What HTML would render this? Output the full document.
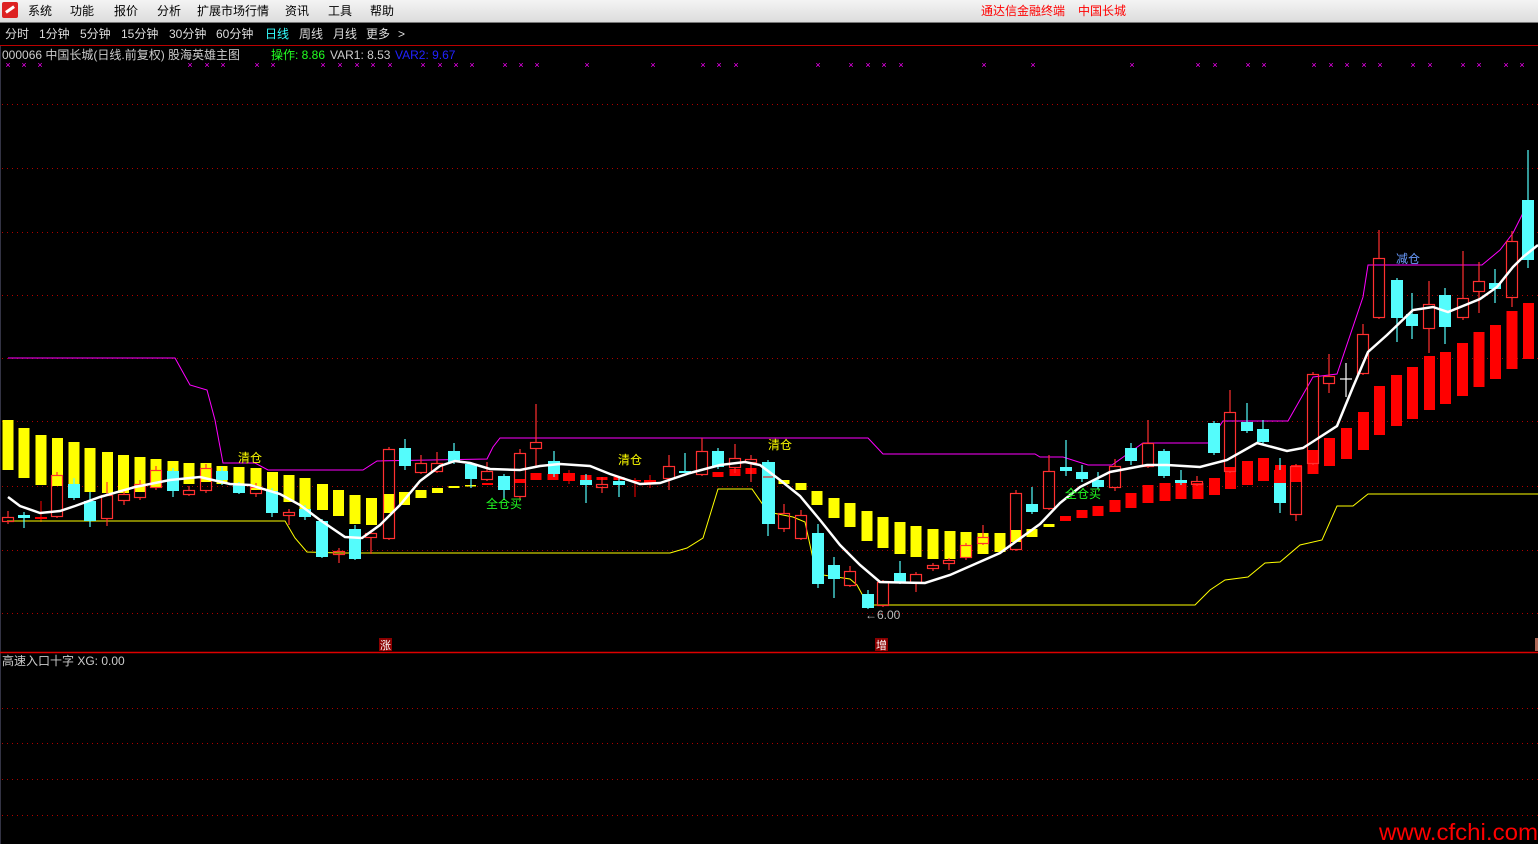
<!DOCTYPE html>
<html><head><meta charset="utf-8"><style>
html,body{margin:0;padding:0;background:#000;width:1538px;height:844px;overflow:hidden;font-family:"Liberation Sans","Noto Sans CJK SC",sans-serif}
.menu{position:absolute;left:0;top:0;width:1538px;height:22px;background:linear-gradient(#f4f4f4,#dcdcdc);border-bottom:1px solid #777;}
.menu span{position:absolute;top:3px;font-size:12px;color:#000;line-height:16px}
.logo{position:absolute;left:2px;top:2px;width:16px;height:16px;background:#d22;border-radius:2px}
.logo:after{content:"";position:absolute;left:3px;top:6px;width:10px;height:3px;background:#fff;transform:rotate(-35deg)}
.row2{position:absolute;left:0;top:23px;width:1538px;height:22px;background:#000;border-bottom:1px solid #b00;}
.row2 span{position:absolute;top:3px;font-size:12px;color:#ddd;line-height:16px}
svg{position:absolute;left:0;top:0}
</style></head><body>
<div class="menu">
<div class="logo"></div>
<span style="left:28px">系统</span><span style="left:70px">功能</span><span style="left:114px">报价</span><span style="left:157px">分析</span><span style="left:197px">扩展市场行情</span><span style="left:285px">资讯</span><span style="left:328px">工具</span><span style="left:370px">帮助</span>
<span style="left:981px;color:#f00">通达信金融终端</span><span style="left:1078px;color:#f00">中国长城</span>
</div>
<div class="row2">
<span style="left:5px">分时</span><span style="left:39px">1分钟</span><span style="left:80px">5分钟</span><span style="left:121px">15分钟</span><span style="left:169px">30分钟</span><span style="left:216px">60分钟</span><span style="left:265px;color:#3ff">日线</span><span style="left:299px">周线</span><span style="left:333px">月线</span><span style="left:366px">更多</span><span style="left:398px">&gt;</span>
</div>
<svg width="1538" height="844" viewBox="0 0 1538 844" style="top:0">
<line x1="0.5" y1="46" x2="0.5" y2="844" stroke="#334" />
<g stroke="#b00000" stroke-dasharray="1 4" stroke-width="1">
<line x1="2" y1="104.5" x2="1538" y2="104.5"/><line x1="2" y1="168.5" x2="1538" y2="168.5"/><line x1="2" y1="232.5" x2="1538" y2="232.5"/><line x1="2" y1="295.5" x2="1538" y2="295.5"/><line x1="2" y1="358.5" x2="1538" y2="358.5"/><line x1="2" y1="421.5" x2="1538" y2="421.5"/><line x1="2" y1="486.5" x2="1538" y2="486.5"/><line x1="2" y1="550.5" x2="1538" y2="550.5"/><line x1="2" y1="613.5" x2="1538" y2="613.5"/>
<line x1="2" y1="708.5" x2="1538" y2="708.5"/><line x1="2" y1="743.5" x2="1538" y2="743.5"/><line x1="2" y1="779.5" x2="1538" y2="779.5"/><line x1="2" y1="815.5" x2="1538" y2="815.5"/>
</g>
<line x1="0" y1="652.5" x2="1538" y2="652.5" stroke="#d00" stroke-width="1.5"/>
<text x="2" y="59" font-size="12" fill="#ccc">000066 中国长城(日线.前复权) 股海英雄主图</text>
<text x="271" y="59" font-size="12" fill="#2f2">操作: 8.86</text>
<text x="330" y="59" font-size="12" fill="#ccc">VAR1: 8.53</text>
<text x="395" y="59" font-size="12" fill="#22f">VAR2: 9.67</text>
<g fill="#f0f" font-size="9" text-anchor="middle">
<text x="8" y="68">×</text><text x="24" y="68">×</text><text x="40" y="68">×</text><text x="190" y="68">×</text><text x="207" y="68">×</text><text x="223" y="68">×</text><text x="257" y="68">×</text><text x="273" y="68">×</text><text x="323" y="68">×</text><text x="340" y="68">×</text><text x="357" y="68">×</text><text x="373" y="68">×</text><text x="390" y="68">×</text><text x="423" y="68">×</text><text x="440" y="68">×</text><text x="456" y="68">×</text><text x="472" y="68">×</text><text x="505" y="68">×</text><text x="521" y="68">×</text><text x="537" y="68">×</text><text x="587" y="68">×</text><text x="653" y="68">×</text><text x="703" y="68">×</text><text x="719" y="68">×</text><text x="736" y="68">×</text><text x="818" y="68">×</text><text x="851" y="68">×</text><text x="868" y="68">×</text><text x="884" y="68">×</text><text x="901" y="68">×</text><text x="984" y="68">×</text><text x="1033" y="68">×</text><text x="1132" y="68">×</text><text x="1198" y="68">×</text><text x="1215" y="68">×</text><text x="1248" y="68">×</text><text x="1264" y="68">×</text><text x="1314" y="68">×</text><text x="1331" y="68">×</text><text x="1347" y="68">×</text><text x="1364" y="68">×</text><text x="1380" y="68">×</text><text x="1413" y="68">×</text><text x="1430" y="68">×</text><text x="1463" y="68">×</text><text x="1479" y="68">×</text><text x="1506" y="68">×</text><text x="1522" y="68">×</text>
</g>
<g fill="#ff0">
<rect x="2.5" y="420" width="11" height="50"/><rect x="18.5" y="428" width="11" height="50"/><rect x="35.5" y="435" width="11" height="50"/><rect x="52" y="438" width="11" height="48"/><rect x="68.5" y="442" width="11" height="51"/><rect x="84.5" y="448" width="11" height="44"/><rect x="102" y="452" width="11" height="41"/><rect x="118" y="455" width="11" height="38"/><rect x="134.5" y="457" width="11" height="35"/><rect x="150.5" y="459" width="11" height="29"/><rect x="167.5" y="461" width="11" height="25"/><rect x="183.5" y="463" width="11" height="21"/><rect x="200.5" y="463" width="11" height="19"/><rect x="216.5" y="466" width="11" height="18"/><rect x="233.5" y="467" width="11" height="20"/><rect x="250.5" y="468" width="11" height="22"/><rect x="267" y="472" width="11" height="25"/><rect x="283.5" y="475" width="11" height="27"/><rect x="299.5" y="478" width="11" height="32"/><rect x="317" y="484" width="11" height="26"/><rect x="333" y="490" width="11" height="26"/><rect x="349.5" y="495" width="11" height="29"/><rect x="366" y="498" width="11" height="27"/><rect x="383" y="494" width="11" height="19"/><rect x="399" y="492" width="11" height="13"/><rect x="415.5" y="490" width="11" height="8"/><rect x="432" y="488" width="11" height="5"/><rect x="448.5" y="486" width="11" height="2"/><rect x="465" y="485" width="11" height="1.5"/>
<rect x="778.5" y="480" width="11" height="4"/><rect x="795.5" y="483" width="11" height="7"/><rect x="811.5" y="491" width="11" height="14"/><rect x="828.5" y="498" width="11" height="20"/><rect x="844.5" y="503" width="11" height="24"/><rect x="861.5" y="511" width="11" height="30"/><rect x="877.5" y="517" width="11" height="31"/><rect x="894.5" y="522" width="11" height="32"/><rect x="910.5" y="526" width="11" height="31"/><rect x="927.5" y="529" width="11" height="30"/><rect x="944.5" y="531" width="11" height="28"/><rect x="960.5" y="532" width="11" height="25"/><rect x="977.5" y="533" width="11" height="21"/><rect x="994.5" y="533" width="11" height="19"/><rect x="1010.5" y="530" width="11" height="12"/><rect x="1026.5" y="529" width="11" height="8"/><rect x="1043.5" y="524" width="11" height="3"/>
</g>
<g fill="#f00">
<rect x="482" y="483" width="11" height="2"/><rect x="498" y="484" width="11" height="2"/><rect x="514.5" y="479" width="11" height="4"/><rect x="530.5" y="473" width="11" height="7"/><rect x="547.5" y="474" width="11" height="6"/><rect x="563.5" y="473" width="11" height="8"/><rect x="580.5" y="475" width="11" height="5"/><rect x="596.5" y="477" width="11" height="3"/><rect x="613.5" y="477" width="11" height="3"/>
<rect x="712.5" y="472" width="11" height="5"/><rect x="729.5" y="469" width="11" height="7"/><rect x="745.5" y="468" width="11" height="6"/>
<rect x="1060" y="516" width="11" height="5"/><rect x="1076.5" y="510" width="11" height="8"/><rect x="1092.5" y="506" width="11" height="10"/><rect x="1109.5" y="500" width="11" height="12"/><rect x="1125.5" y="493" width="11" height="15"/><rect x="1142.5" y="485" width="11" height="18"/><rect x="1159.5" y="483" width="11" height="18"/><rect x="1175.5" y="483" width="11" height="16"/><rect x="1192.5" y="483" width="11" height="16"/><rect x="1209" y="478" width="11" height="17"/><rect x="1225" y="467" width="11" height="22"/><rect x="1242" y="461" width="11" height="24"/><rect x="1258" y="458" width="11" height="23"/><rect x="1275" y="465" width="11" height="18"/><rect x="1291" y="465" width="11" height="17"/><rect x="1307.5" y="450" width="11" height="24"/><rect x="1324" y="438" width="11" height="28"/><rect x="1341" y="428" width="11" height="31"/><rect x="1358" y="412" width="11" height="38"/><rect x="1374" y="386" width="11" height="49"/><rect x="1391" y="375" width="11" height="51"/><rect x="1407" y="367" width="11" height="52"/><rect x="1424" y="356" width="11" height="54"/><rect x="1440" y="352" width="11" height="52"/><rect x="1457" y="343" width="11" height="53"/><rect x="1473.5" y="332" width="11" height="55"/><rect x="1490" y="325" width="11" height="54"/><rect x="1506.5" y="311" width="11" height="58"/><rect x="1523" y="303" width="11" height="56"/>
<rect x="35" y="517" width="12" height="2"/><rect x="563" y="473" width="12" height="8"/><rect x="629" y="480" width="12" height="1.5"/><rect x="644" y="480" width="12" height="4"/>
</g>
<g stroke="#f00" stroke-width="1"><line x1="41" y1="501" x2="41" y2="522"/><line x1="569" y1="470" x2="569" y2="484"/><line x1="635" y1="478" x2="635" y2="497"/><line x1="650" y1="475" x2="650" y2="488"/></g>
<polyline fill="none" stroke="#ff0" stroke-width="1" points="7,521 285,521 295,538 307,552 340,553 670,553 687,548 703,538 718,489 752,489 768,512 793,517 805,522 815,568 823,575 850,579 857,585 868,605 1195,605 1210,590 1225,580 1248,577 1265,563 1280,562 1300,545 1322,540 1337,506 1353,506 1368,494 1538,494"/>
<polyline fill="none" stroke="#f0f" stroke-width="1" points="8,358 175,358 190,385 207,390 215,420 223,463 255,463 268,470 363,470 377,461 487,459 493,447 500,438 868,438 883,454 1035,454 1040,457 1063,457 1088,465 1112,465 1143,443 1208,443 1223,421 1288,421 1313,377 1337,374 1363,297 1368,265 1482,265 1500,250 1513,233 1522,215 1528,200"/>
<g stroke="#ff3030" stroke-width="1.2" fill="none">
<path d="M8 511V517M8 521V524M57 472V475M57 516V518M107 482V495M107 518V526M124 490V494M124 500V505M140 480V484M140 497V500M156 466V470M156 487V490M189 486V490M189 494V496M206 464V468M206 490V493M256 483V487M256 493V497M289 509V512M289 515V525M339 548V551M339 554V563M371 530V533M371 537V554M389 447V449M389 538V540M421 455V463M421 472V474M437 452V463M437 471V473M487 462V471M487 479V481M520 449V453M520 496V499M536 404V442M536 448V466M602 477V484M602 487V493M669 455V466M669 478V490M702 438V451M702 474V476M735 444V458M735 467V473M751 455V459M751 462V482M784 504V513M784 528V532M801 510V515M801 538V540M850 566V571M850 585V587M883 580V582M883 605V607M916 572V574M916 582V592M933 563V565M933 568V571M949 558V560M949 563V570M966 543V545M966 557V560M983 525V537M983 543V545M1016 490V493M1016 549V551M1049 455V471M1049 508V510M1115 459V466M1115 487V491M1148 420V443M1148 466V468M1197 476V481M1197 484V486M1230 390V412M1230 471V473M1296 464V466M1296 514V521M1313 372V374M1313 463V465M1329 354V376M1329 383V393M1363 324V334M1363 373V375M1379 230V258M1379 317V319M1429 281V304M1429 328V353M1463 251V298M1463 317V320M1479 262V281M1479 291V313M1512 231V241M1512 297V307"/>
<rect x="2.5" y="517.5" width="11" height="4"/><rect x="51.5" y="475.5" width="11" height="41"/><rect x="101.5" y="495.5" width="11" height="23"/><rect x="118.5" y="494.5" width="11" height="6"/><rect x="134.5" y="484.5" width="11" height="13"/><rect x="150.5" y="470.5" width="11" height="17"/><rect x="183.5" y="490.5" width="11" height="4"/><rect x="200.5" y="468.5" width="11" height="22"/><rect x="250.5" y="487.5" width="11" height="6"/><rect x="283.5" y="512.5" width="11" height="3"/><rect x="333.5" y="551.5" width="11" height="3"/><rect x="365.5" y="533.5" width="11" height="4"/><rect x="383.5" y="449.5" width="11" height="89"/><rect x="415.5" y="463.5" width="11" height="9"/><rect x="431.5" y="463.5" width="11" height="8"/><rect x="481.5" y="471.5" width="11" height="8"/><rect x="514.5" y="453.5" width="11" height="43"/><rect x="530.5" y="442.5" width="11" height="6"/><rect x="596.5" y="484.5" width="11" height="3"/><rect x="663.5" y="466.5" width="11" height="12"/><rect x="696.5" y="451.5" width="11" height="23"/><rect x="729.5" y="458.5" width="11" height="9"/><rect x="745.5" y="459.5" width="11" height="3"/><rect x="778.5" y="513.5" width="11" height="15"/><rect x="795.5" y="515.5" width="11" height="23"/><rect x="844.5" y="571.5" width="11" height="14"/><rect x="877.5" y="582.5" width="11" height="23"/><rect x="910.5" y="574.5" width="11" height="8"/><rect x="927.5" y="565.5" width="11" height="3"/><rect x="943.5" y="560.5" width="11" height="3"/><rect x="960.5" y="545.5" width="11" height="12"/><rect x="977.5" y="537.5" width="11" height="6"/><rect x="1010.5" y="493.5" width="11" height="56"/><rect x="1043.5" y="471.5" width="11" height="37"/><rect x="1109.5" y="466.5" width="11" height="21"/><rect x="1142.5" y="443.5" width="11" height="23"/><rect x="1191.5" y="481.5" width="11" height="3"/><rect x="1224.5" y="412.5" width="11" height="59"/><rect x="1290.5" y="466.5" width="11" height="48"/><rect x="1307.5" y="374.5" width="11" height="89"/><rect x="1323.5" y="376.5" width="11" height="7"/><rect x="1357.5" y="334.5" width="11" height="39"/><rect x="1373.5" y="258.5" width="11" height="59"/><rect x="1423.5" y="304.5" width="11" height="24"/><rect x="1457.5" y="298.5" width="11" height="19"/><rect x="1473.5" y="281.5" width="11" height="10"/><rect x="1506.5" y="241.5" width="11" height="56"/>
</g>
<g stroke="#54fcfc" stroke-width="1.2"><path d="M24 512V528M74 478V500M90 492V527M173 468V497M222 467V485M239 482V494M272 488V517M305 505V520M322 519V558M355 525V560M405 439V470M454 443V464M471 462V488M504 474V500M554 451V477M586 474V503M619 478V497M685 453V473M718 448V469M768 460V536M818 524V588M834 557V598M868 590V609M900 561V584M1032 487V514M1066 440V476M1082 465V482M1098 472V489M1131 443V465M1164 449V478M1181 470V485M1214 421V455M1247 403V433M1263 420V444M1280 458V513M1397 278V342M1412 293V339M1445 288V344M1495 269V303M1528 150V268"/></g>
<g fill="#54fcfc">
<rect x="18" y="515" width="12" height="3"/><rect x="68" y="484" width="12" height="14"/><rect x="84" y="501" width="12" height="20"/><rect x="167" y="471" width="12" height="20"/><rect x="216" y="471" width="12" height="9"/><rect x="233" y="484" width="12" height="9"/><rect x="266" y="491" width="12" height="22"/><rect x="299" y="509" width="12" height="8"/><rect x="316" y="521" width="12" height="36"/><rect x="349" y="529" width="12" height="30"/><rect x="399" y="448" width="12" height="18"/><rect x="448" y="451" width="12" height="11"/><rect x="465" y="464" width="12" height="15"/><rect x="498" y="476" width="12" height="14"/><rect x="548" y="461" width="12" height="13"/><rect x="580" y="480" width="12" height="5"/><rect x="613" y="481" width="12" height="4"/><rect x="679" y="471" width="12" height="2"/><rect x="712" y="451" width="12" height="16"/><rect x="762" y="462" width="13" height="62"/><rect x="812" y="533" width="12" height="51"/><rect x="828" y="565" width="12" height="14"/><rect x="862" y="594" width="12" height="14"/><rect x="894" y="573" width="12" height="9"/><rect x="1026" y="504" width="12" height="8"/><rect x="1060" y="467" width="12" height="4"/><rect x="1076" y="472" width="12" height="7"/><rect x="1092" y="480" width="12" height="7"/><rect x="1125" y="448" width="12" height="13"/><rect x="1158" y="451" width="12" height="25"/><rect x="1175" y="480" width="12" height="3"/><rect x="1208" y="423" width="12" height="30"/><rect x="1241" y="422" width="12" height="9"/><rect x="1257" y="429" width="12" height="13"/><rect x="1274" y="483" width="12" height="20"/><rect x="1391" y="280" width="12" height="38"/><rect x="1406" y="314" width="12" height="12"/><rect x="1439" y="295" width="12" height="32"/><rect x="1489" y="283" width="12" height="6"/><rect x="1522" y="200" width="12" height="60"/>
</g>
<rect x="1274" y="470" width="12" height="13" fill="#f00"/>
<line x1="763" y1="477" x2="773" y2="477" stroke="#f00"/>
<g stroke="#fff" stroke-width="1.2"><line x1="1346" y1="363" x2="1346" y2="397"/><line x1="1340" y1="379" x2="1352" y2="379"/></g>
<polyline fill="none" stroke="#fff" stroke-width="2.5" points="8,497 20,506 40,513 60,511 75,506 100,497 135,487 170,480 200,477 230,484 250,485 280,494 300,505 320,520 345,537 362,538 380,525 400,505 420,481 440,466 455,461 470,463 490,469 520,470 540,466 560,464 590,466 610,474 640,484 660,483 690,473 720,465 745,462 760,465 780,480 800,496 820,520 840,545 860,565 880,582 925,583 950,575 1000,553 1040,524 1060,503 1080,487 1110,472 1147,465 1167,465 1200,467 1227,460 1257,443 1287,451 1303,448 1337,426 1353,387 1368,352 1387,335 1413,310 1433,307 1448,312 1480,299 1497,287 1513,267 1523,257 1538,245"/>
<g font-size="12">
<text x="238" y="462" fill="#ff0">清仓</text>
<text x="618" y="464" fill="#ff0">清仓</text>
<text x="768" y="449" fill="#ff0">清仓</text>
<text x="486" y="508" fill="#2f2">全仓买</text>
<text x="1065" y="498" fill="#2f2">全仓买</text>
<text x="1396" y="263" fill="#6a9cff">减仓</text>
<text x="865" y="619" fill="#bbb">←6.00</text>
</g>
<rect x="379" y="638" width="13" height="13" fill="#8b0000"/><text x="380" y="649" font-size="11" fill="#fff">涨</text>
<rect x="875" y="638" width="13" height="13" fill="#8b0000"/><text x="876" y="649" font-size="11" fill="#fff">增</text>
<rect x="1535" y="638" width="3" height="13" fill="#a65" />
<text x="2" y="665" font-size="12" fill="#ccc">高速入口十字 XG: 0.00</text>
<text x="1379" y="840" font-size="23.5" fill="#f00" textLength="159" lengthAdjust="spacingAndGlyphs">www.cfchi.com</text>
</svg>
</body></html>
